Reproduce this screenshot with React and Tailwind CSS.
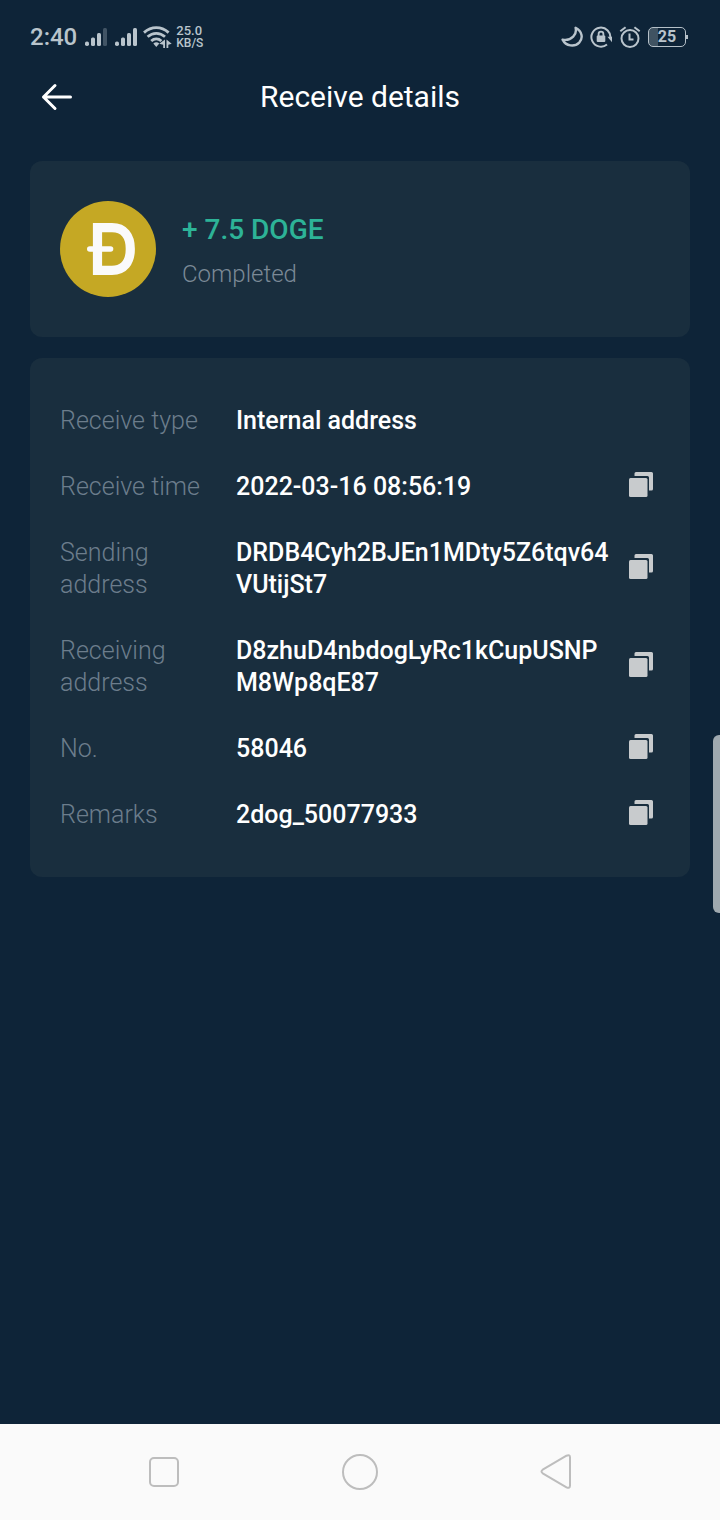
import React from "react";

const details = [
  { label: "Receive type", value: "Internal address" },
  { label: "Receive time", value: "2022-03-16 08:56:19", copy: true },
  { label: "Sending address", value: "DRDB4Cyh2BJEn1MDty5Z6tqv64VUtijSt7", copy: true },
  { label: "Receiving address", value: "D8zhuD4nbdogLyRc1kCupUSNPM8Wp8qE87", copy: true },
  { label: "No.", value: "58046", copy: true },
  { label: "Remarks", value: "2dog_50077933", copy: true },
];

function Signal({ weak = false }) {
  return (
    <svg width="22" height="18" viewBox="0 0 22 18" fill="currentColor" aria-hidden="true">
      <rect x="0" y="13.5" width="4" height="4.5" rx="1.8" />
      <rect x="6" y="9.5" width="4" height="8.5" rx="1.5" />
      <rect x="12" y="5" width="4" height="13" rx="1.5" />
      <rect x="18" y="0" width="4" height="18" rx="1.5" opacity={weak ? 0.3 : 1} />
    </svg>
  );
}

function Wifi() {
  return (
    <svg width="29" height="22" viewBox="0 0 29 22" fill="none" stroke="currentColor" strokeWidth="2.8" aria-hidden="true">
      <path d="M1 6.6C8.4 0 18.2 0 25.6 6.6" />
      <path d="M4.6 10.8c5.2-4.6 12.2-4.6 17.4 0" />
      <path d="M8.2 15c3-2.7 7.2-2.7 10.2 0" />
      <path d="M10.3 17.5c2-1.6 4-1.6 6 0l-3 3.500Z" fill="currentColor" stroke="none" />
      <path d="M16.300 17.800 22 13.500V22h-1.800v-3.200ZM23.500 13.500l5.200 4.300-3.400 1V22h-1.800Z" fill="currentColor" stroke="none" />
    </svg>
  );
}

function Moon() {
  return (
    <svg width="22" height="22" viewBox="0 0 22 22" fill="none" stroke="currentColor" strokeWidth="2.4" strokeLinejoin="round" aria-hidden="true">
      <path d="M14.600 1.800c6.400 3.400 8 10 3.600 14.800-4.600 4.700-13.200 3.800-16.600-3 4.200.9 8-.4 10.600-3 2.400-2.400 3.200-5.600 2.400-8.800Z" />
    </svg>
  );
}

function RotationLock() {
  return (
    <svg width="22" height="22" viewBox="0 0 22 22" fill="none" stroke="currentColor" strokeWidth="2" aria-hidden="true">
      <path d="M17 18.400A9.500 9.500 0 1 1 20.300 12.500" />
      <path d="M17.500 10.800h4.500v5.400Z" fill="currentColor" stroke="none" />
      <rect x="6.700" y="9.400" width="8.600" height="6.600" rx="1" fill="currentColor" stroke="none" />
      <path d="M8.600 10V8a2.400 2.400 0 0 1 4.800 0V10" strokeWidth="1.800" />
    </svg>
  );
}

function Alarm() {
  return (
    <svg width="22" height="22" viewBox="0 0 22 22" fill="none" stroke="currentColor" strokeWidth="2" aria-hidden="true">
      <circle cx="11" cy="12.500" r="8.500" />
      <path d="M10.500 7.500v6H14.500" />
      <path d="M1.300 5.300 6.600 1.200M20.700 5.300l-5.300-4.100" />
    </svg>
  );
}

function Battery() {
  return (
    <div className="flex items-center">
      <div className="flex h-5 w-[38px] items-center justify-center rounded-[5px] border border-[#b5c0c8] bg-linear-to-r from-[#405362] from-25% to-transparent to-25%">
        <span className="text-base leading-none font-bold">25</span>
      </div>
      <div className="h-1 w-0.5 bg-[#b5c0c8]" />
    </div>
  );
}

function StatusBar() {
  return (
    <div className="flex h-[74px] items-center justify-between pr-8 pl-[30px] text-[#b9c4cc]">
      <div className="flex items-center gap-1.5">
        <div className="flex items-center gap-2">
          <span className="text-2xl font-medium">2:40</span>
          <Signal weak />
          <Signal />
        </div>
        <div className="flex items-center gap-1">
          <Wifi />
          <div className="text-[13px] leading-[13px] font-medium">
            <div>25.0</div>
            <div className="text-xs leading-[13px]">KB/S</div>
          </div>
        </div>
      </div>
      <div className="flex items-center gap-[7px]">
        <Moon />
        <RotationLock />
        <Alarm />
        <Battery />
      </div>
    </div>
  );
}

function Doge() {
  return (
    <svg width="96" height="96" viewBox="0 0 96 96" className="shrink-0" aria-label="Dogecoin">
      <circle cx="48" cy="48" r="48" fill="#c5a824" />
      <g fill="none" stroke="#fafafa">
        <path d="M37.500 26.700H52C64 26.700 70.300 35 70.300 48S64 69.300 52 69.300H37.500Z" strokeWidth="9.200" />
        <path d="M29.800 48H50.500" strokeWidth="5.600" strokeLinecap="round" />
      </g>
    </svg>
  );
}

function CopyIcon() {
  return (
    <svg width="24" height="26" viewBox="0 0 24 26" fill="#c8cbcd" aria-hidden="true">
      <path d="M7 0h15.500Q24 0 24 1.500V17q0 1.500-1.500 1.500H20V5.500Q20 4 18.500 4H5.500V1.500Q5.500 0 7 0Z" />
      <rect x="0" y="6" width="18.500" height="19" rx="1.500" />
    </svg>
  );
}

function DetailRow({ label, value, copy }) {
  return (
    <div className="flex items-center">
      <dl className="flex min-w-0 flex-1 gap-8">
        <dt className="w-36 shrink-0 font-light text-[#6c7d8c]">{label}</dt>
        <dd className="min-w-0 flex-1 font-medium break-all text-white">{value}</dd>
      </dl>
      <div className="ml-4 w-6 shrink-0">
        {copy && (
          <button type="button" aria-label={`Copy ${label}`} className="block cursor-pointer pb-1">
            <CopyIcon />
          </button>
        )}
      </div>
    </div>
  );
}

export default function App() {
  return (
    <div className="relative flex min-h-screen flex-col bg-[#0e2438] font-[Roboto,sans-serif]">
      <StatusBar />

      <header className="grid h-[46px] grid-cols-[1fr_auto_1fr] items-center px-10">
        <button type="button" aria-label="Back" className="w-fit cursor-pointer text-white">
          <svg width="34" height="28" viewBox="0 0 34 28" fill="none" stroke="currentColor" strokeWidth="3" strokeLinecap="round" strokeLinejoin="round">
            <path d="M15 2.500 3.500 14 15 25.500M3.500 14H30.500" />
          </svg>
        </button>
        <h1 className="text-3xl text-white">Receive details</h1>
      </header>

      <main className="flex flex-1 flex-col gap-[21px] px-[30px] pt-[41px]">
        <section className="flex items-center gap-[26px] rounded-xl bg-[#192e3e] px-[30px] py-10">
          <Doge />
          <div className="pt-1.5">
            <div className="text-[28px] leading-10 font-medium text-[#2db397]">+ 7.5 DOGE</div>
            <div className="mt-1 text-2xl leading-10 font-light text-[#7b8996]">Completed</div>
          </div>
        </section>

        <section className="flex flex-col gap-[34px] rounded-xl bg-[#192e3e] pt-[47px] pr-[37px] pb-[46px] pl-[30px] text-[25px] leading-8">
          {details.map((item) => (
            <DetailRow key={item.label} {...item} />
          ))}
        </section>
      </main>

      {/* Edge panel handle */}
      <div className="absolute top-[735px] right-0 h-[178px] w-[7px] rounded-l-md bg-[#9fa9af]" />

      <nav className="grid h-24 grid-cols-3 place-items-center bg-[#fafafa] px-[66px] text-[#bdbdbd]">
        <button type="button" aria-label="Recent apps" className="cursor-pointer">
          <svg width="36" height="36" viewBox="0 0 36 36" fill="none" stroke="currentColor" strokeWidth="2">
            <rect x="4" y="4" width="28" height="28" rx="4" />
          </svg>
        </button>
        <button type="button" aria-label="Home" className="cursor-pointer">
          <svg width="36" height="36" viewBox="0 0 36 36" fill="none" stroke="currentColor" strokeWidth="2">
            <circle cx="18" cy="18" r="17" />
          </svg>
        </button>
        <button type="button" aria-label="Back to previous app" className="cursor-pointer">
          <svg width="36" height="36" viewBox="0 0 36 36" fill="none" stroke="currentColor" strokeWidth="2" strokeLinejoin="round">
            <path d="M4.700 15.700 28.500 1.700Q32 .3 32 3.500V31.500Q32 34.800 28.500 33.300L4.700 19.300Q2.300 17.500 4.700 15.700Z" />
          </svg>
        </button>
      </nav>
    </div>
  );
}
